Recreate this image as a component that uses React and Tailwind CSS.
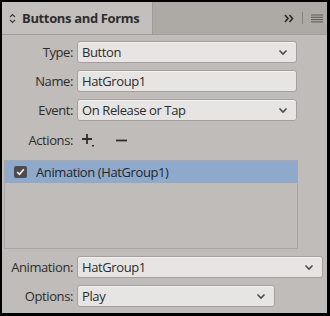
import React from 'react';

const font = { fontFamily: '"Open Sans", "DejaVu Sans", sans-serif' };

const Chevron = () => (
  <svg width="10" height="7" viewBox="0 0 10 7" className="shrink-0">
    <path d="M1.5 1.5 L5 5 L8.5 1.5" fill="none" stroke="#4a4a4a" strokeWidth="1.6" />
  </svg>
);

const Field = ({ label, value, width, select = true, className = '' }) => (
  <div className={`flex items-center h-[22px] ${className}`}>
    <div className="w-[71px] text-right text-[13px] tracking-[-0.4px] text-[#2c2c2c] leading-none">{label}</div>
    <div
      className={`ml-[4px] h-[22px] flex items-center justify-between pl-[4px] pr-[8px] bg-[#e7e5e3] border border-[#a4a09d] rounded-[3px] text-[13px] tracking-[-0.4px] text-[#2c2c2c] shadow-[inset_0_1px_0_#f2f1f0] ${width}`}
    >
      <span className="leading-none">{value}</span>
      {select && <Chevron />}
    </div>
  </div>
);

export default function App() {
  return (
    <div
      style={font}
      className="w-[330px] h-[316px] bg-black pt-[2px] pl-[2px] pr-[3px] pb-[3px]"
    >
      <div className="w-full h-full bg-[#c0bcb9] flex flex-col">
        {/* header */}
        <div className="h-[33px] flex bg-[#adaaa6] border-b border-[#a09c99] shrink-0">
          <div className="w-[151px] h-full bg-[#c3bfbc] border-r border-[#9f9b98] flex items-center pl-[7px]">
            <svg width="7" height="11" viewBox="0 0 7 11" className="mr-[6px]">
              <path d="M1 4 L3.5 1.5 L6 4 M1 7 L3.5 9.5 L6 7" fill="none" stroke="#3a3a3a" strokeWidth="1.1" />
            </svg>
            <span className="text-[13px] font-bold tracking-[-0.35px] text-[#2e2e2e] leading-none">Buttons and Forms</span>
          </div>
          <div className="flex-1 flex items-center justify-end pr-[4px]">
            <svg width="10" height="9" viewBox="0 0 10 9">
              <path d="M1 1 L4 4.5 L1 8 M5.5 1 L8.5 4.5 L5.5 8" fill="none" stroke="#2a2a2a" strokeWidth="1.6" />
            </svg>
            <div className="w-px h-[12px] bg-[#858280] ml-[8px] mr-[8px]" />
            <svg width="12" height="9" viewBox="0 0 12 9">
              <path d="M0 1 H12 M0 3.3 H12 M0 5.6 H12 M0 7.9 H12" stroke="#5a5856" strokeWidth="1" />
            </svg>
          </div>
        </div>

        <Field label="Type:" value="Button" width="w-[220px]" className="mt-[6px]" />
        <Field label="Name:" value="HatGroup1" width="w-[220px]" select={false} className="mt-[7px]" />
        <Field label="Event:" value="On Release or Tap" width="w-[220px]" className="mt-[7px]" />

        <div className="flex items-center h-[22px] mt-[8px]">
          <div className="w-[71px] text-right text-[13px] tracking-[-0.4px] text-[#2c2c2c] leading-none">Actions:</div>
          <div className="ml-[8px] flex items-center">
            <svg width="14" height="14" viewBox="0 0 14 14">
              <path d="M6 1 V11 M1 6 H11" stroke="#2e2e2e" strokeWidth="1.8" />
              <rect x="11" y="12" width="2" height="1.5" fill="#2e2e2e" />
            </svg>
            <svg width="11" height="3" viewBox="0 0 11 3" className="ml-[21px]">
              <path d="M0 1.5 H11" stroke="#2e2e2e" strokeWidth="1.8" />
            </svg>
          </div>
        </div>

        <div className="ml-[2px] mt-[9px] w-[294px] h-[89px] border border-[#aaa6a3] bg-[#c0bcb9]">
          <div className="h-[22px] bg-[#8ea9cc] flex items-center pl-[9px]">
            <div className="w-[13px] h-[12px] bg-[#4c4c4c] rounded-[2px] flex items-center justify-center">
              <svg width="9" height="8" viewBox="0 0 9 8">
                <path d="M1.2 4.2 L3.5 6.3 L7.8 1.3" fill="none" stroke="#f4f4f4" strokeWidth="1.6" />
              </svg>
            </div>
            <span className="ml-[9px] text-[13px] tracking-[-0.4px] text-[#262626] leading-none">Animation (HatGroup1)</span>
          </div>
        </div>

        <Field label="Animation:" value="HatGroup1" width="w-[246px]" className="mt-[7px]" />
        <Field label="Options:" value="Play" width="w-[198px]" className="mt-[7px]" />
      </div>
    </div>
  );
}
